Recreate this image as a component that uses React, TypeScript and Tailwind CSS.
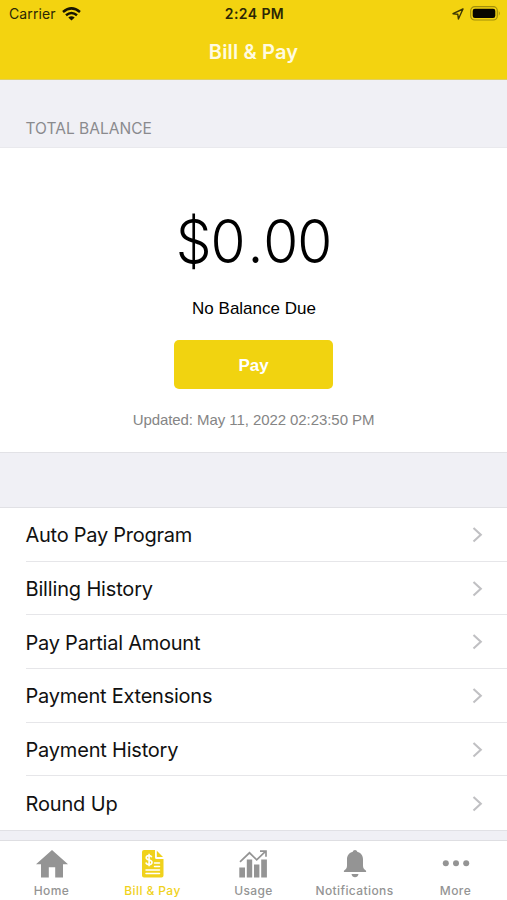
import React from 'react';

interface TabItem {
    label: string;
    icon: React.ReactNode;
    active?: boolean;
}

const menuItems = [
    { label: 'Auto Pay Program', tracking: 'tracking-[-0.26px]' },
    { label: 'Billing History', tracking: 'tracking-[-0.16px]' },
    { label: 'Pay Partial Amount', tracking: 'tracking-[-0.24px]' },
    { label: 'Payment Extensions', tracking: 'tracking-[-0.24px]' },
    { label: 'Payment History', tracking: 'tracking-[-0.2px]' },
    { label: 'Round Up', tracking: 'tracking-[-0.15px]' },
];

const HomeIcon = () => (
    <svg width="32" height="28" viewBox="0 0 32 28" fill="currentColor">
        <path d="M16 0 32 14.2H27V27.5H19.2V17.2H12.8V27.5H5V14.2H0Z" />
    </svg>
);

const BillIcon = () => (
    <svg width="22" height="28" viewBox="0 0 22 28">
        <path d="M2 0H13V7.5Q13 9 14.5 9H21.5V25.5Q21.5 27.5 19.5 27.5H2Q0 27.5 0 25.5V2Q0 0 2 0Z" fill="currentColor" />
        <path d="M14.8 0.8 21 7H14.8Z" fill="currentColor" />
        <path
            d="M9.8 7.3C9.3 6.1 8.3 5.6 7 5.6 5.3 5.6 4.2 6.5 4.2 7.8 4.2 10.7 10 9.2 10 12.2 10 13.6 8.7 14.5 7.1 14.5 5.4 14.5 4.3 13.7 3.9 12.4M7.1 3.8V16.3"
            fill="none"
            stroke="#fff"
            strokeWidth="1.6"
        />
        <path d="M12.5 13H17.5M12.5 16.5H17.5M4 20H17.5M4 23.5H17.5" stroke="#fff" strokeWidth="1.5" strokeLinecap="round" />
    </svg>
);

const UsageIcon = () => (
    <svg width="29" height="28" viewBox="0 0 29 28" fill="currentColor">
        <path d="M.3 17.5H6V27.5H.3ZM7.8 9.5H13.2V27.5H7.8ZM15 14.5H20.4V27.5H15ZM22.2 9.5H27.9V27.5H22.2Z" />
        <path d="M1 11.8 10.5 2.8 17.7 9.8 26.5 1.3M21 1.1H27V6.8" fill="none" stroke="currentColor" strokeWidth="1.7" />
    </svg>
);

const BellIcon = () => (
    <svg width="24" height="28" viewBox="0 0 24 28" fill="currentColor">
        <path d="M12 0C13.2 0 14 .8 14.2 1.8 17.8 2.8 20 5.7 20 9.5V15.5C20 18 21 19.2 22.8 20.5 23.5 21.2 23.3 22.1 22.3 22.1H1.7C.7 22.1.5 21.2 1.2 20.5 3 19.2 4 18 4 15.5V9.5C4 5.7 6.2 2.8 9.8 1.8 10 .8 10.8 0 12 0Z" />
        <path d="M8.5 24H15.5C15 26.2 13.8 27.3 12 27.3S9 26.2 8.5 24Z" />
    </svg>
);

const MoreIcon = () => (
    <svg width="28" height="28" viewBox="0 0 28 28" fill="currentColor">
        <circle cx="3.8" cy="13.3" r="3" />
        <circle cx="14" cy="13.3" r="3" />
        <circle cx="24.2" cy="13.3" r="3" />
    </svg>
);

const tabs: TabItem[] = [
    { label: 'Home', icon: <HomeIcon /> },
    { label: 'Bill & Pay', icon: <BillIcon />, active: true },
    { label: 'Usage', icon: <UsageIcon /> },
    { label: 'Notifications', icon: <BellIcon /> },
    { label: 'More', icon: <MoreIcon /> },
];

const StatusBar = () => (
    <div className="grid h-[27px] grid-cols-3 items-center pl-[9px] pr-[6px] text-[14px] text-[#2b2705]">
        <div className="flex items-center gap-[6px]">
            <span className="tracking-[0.1px]">Carrier</span>
            <svg width="19" height="14" viewBox="0 0 19 14" fill="none" stroke="#181602" strokeWidth="2.5">
                <path d="M1 5Q9.5-2.2 18 5" />
                <path d="M4 8.3Q9.5 3.7 15 8.3" />
                <path d="M9.5 13.6 6.3 10.5Q9.5 7.8 12.7 10.5Z" fill="#181602" stroke="none" />
            </svg>
        </div>
        <span className="pr-px text-center text-[14px] font-semibold tracking-[0.4px]">2:24 PM</span>
        <div className="flex items-center justify-end gap-[6px]">
            <svg width="12" height="12" viewBox="0 0 12 12" fill="none" stroke="#3c3605" strokeWidth="1.4" strokeLinejoin="round">
                <path d="M11 1 1 5.7 5.8 6.3 6.4 11Z" />
            </svg>
            <svg width="31" height="15" viewBox="0 0 31 15">
                <rect x=".7" y=".7" width="26.6" height="13.3" rx="4" fill="none" stroke="#a28f0b" strokeWidth="1.2" />
                <rect x="2.7" y="2.7" width="22.6" height="9.3" rx="2.2" fill="#080700" />
                <path d="M28.8 5Q30.8 7.3 28.8 9.8Z" fill="#a28f0b" />
            </svg>
        </div>
    </div>
);

const MenuRow: React.FC<{ label: string; tracking: string; last: boolean }> = ({ label, tracking, last }) => (
    <li className="flex flex-1 pl-[25.5px]">
        <div className={`flex flex-1 items-center justify-between pr-[24px] ${last ? '' : 'border-b border-[#e6e6e9]'}`}>
            <span className={`whitespace-nowrap pt-[2px] text-[20px] leading-6 ${tracking}`}>{label}</span>
            <svg width="11" height="17" viewBox="0 0 11 17" fill="none" stroke="#c0c0c3" strokeWidth="2.1">
                <path d="M1.5 2 8.8 8.7 1.5 15.4" />
            </svg>
        </div>
    </li>
);

export default function App() {
    return (
        <div className="flex h-[900px] w-[507px] flex-col overflow-hidden bg-[#f0f0f5] font-['Inter',sans-serif] text-[#111]">
            <header className="h-[80px] shrink-0 border-b border-[#e0cf60] bg-[#f3d310]">
                <StatusBar />
                <h1 className="pt-[10px] text-center text-[20px] font-semibold leading-[30px] tracking-[0.15px] text-[#fffbe0]">Bill &amp; Pay</h1>
            </header>

            <h2 className="h-[68px] shrink-0 border-b border-[#e9e9ed] pl-[25.5px] pt-[39px] text-[15.5px] leading-5 tracking-[0.02px] text-[#8a8a8e]">
                TOTAL BALANCE
            </h2>

            <section className="flex h-[305px] shrink-0 flex-col items-center border-b border-[#e2e2e6] bg-white font-['Liberation_Sans',sans-serif]">
                <p className="mt-[57px] whitespace-nowrap font-['Inter',sans-serif] text-[61px] font-light leading-[72px] text-black">
                    <span className="inline-block scale-x-[0.93] tracking-[-1.3px]">
                        $0<span className="pl-[3.5px] pr-px">.</span>00
                    </span>
                </p>
                <p className="mt-[21px] pl-px text-[17px] leading-[21px] text-black">No Balance Due</p>
                <button className="mt-[21px] h-[49px] w-[159px] rounded-[5px] bg-[#f1d310] pt-[2px] text-[17px] font-bold text-white">Pay</button>
                <p className="mt-[21px] text-[15px] leading-5 tracking-[-0.07px] text-[#858585]">Updated: May 11, 2022 02:23:50 PM</p>
            </section>

            <ul className="mt-[54px] flex h-[324px] shrink-0 flex-col border-y border-[#e1e1e5] bg-white">
                {menuItems.map((item, index) => (
                    <MenuRow key={item.label} {...item} last={index === menuItems.length - 1} />
                ))}
            </ul>

            <nav className="mt-[9px] grid flex-1 grid-cols-5 border-t border-[#dedee2] bg-white px-px">
                {tabs.map((tab) => (
                    <div key={tab.label} className={`flex flex-col items-center pt-[9px] ${tab.active ? 'text-[#f0d21c]' : 'text-[#949494]'}`}>
                        {tab.icon}
                        <span className="mt-[5px] whitespace-nowrap text-[12px] font-medium leading-4 tracking-[0.4px]">{tab.label}</span>
                    </div>
                ))}
            </nav>
        </div>
    );
}
